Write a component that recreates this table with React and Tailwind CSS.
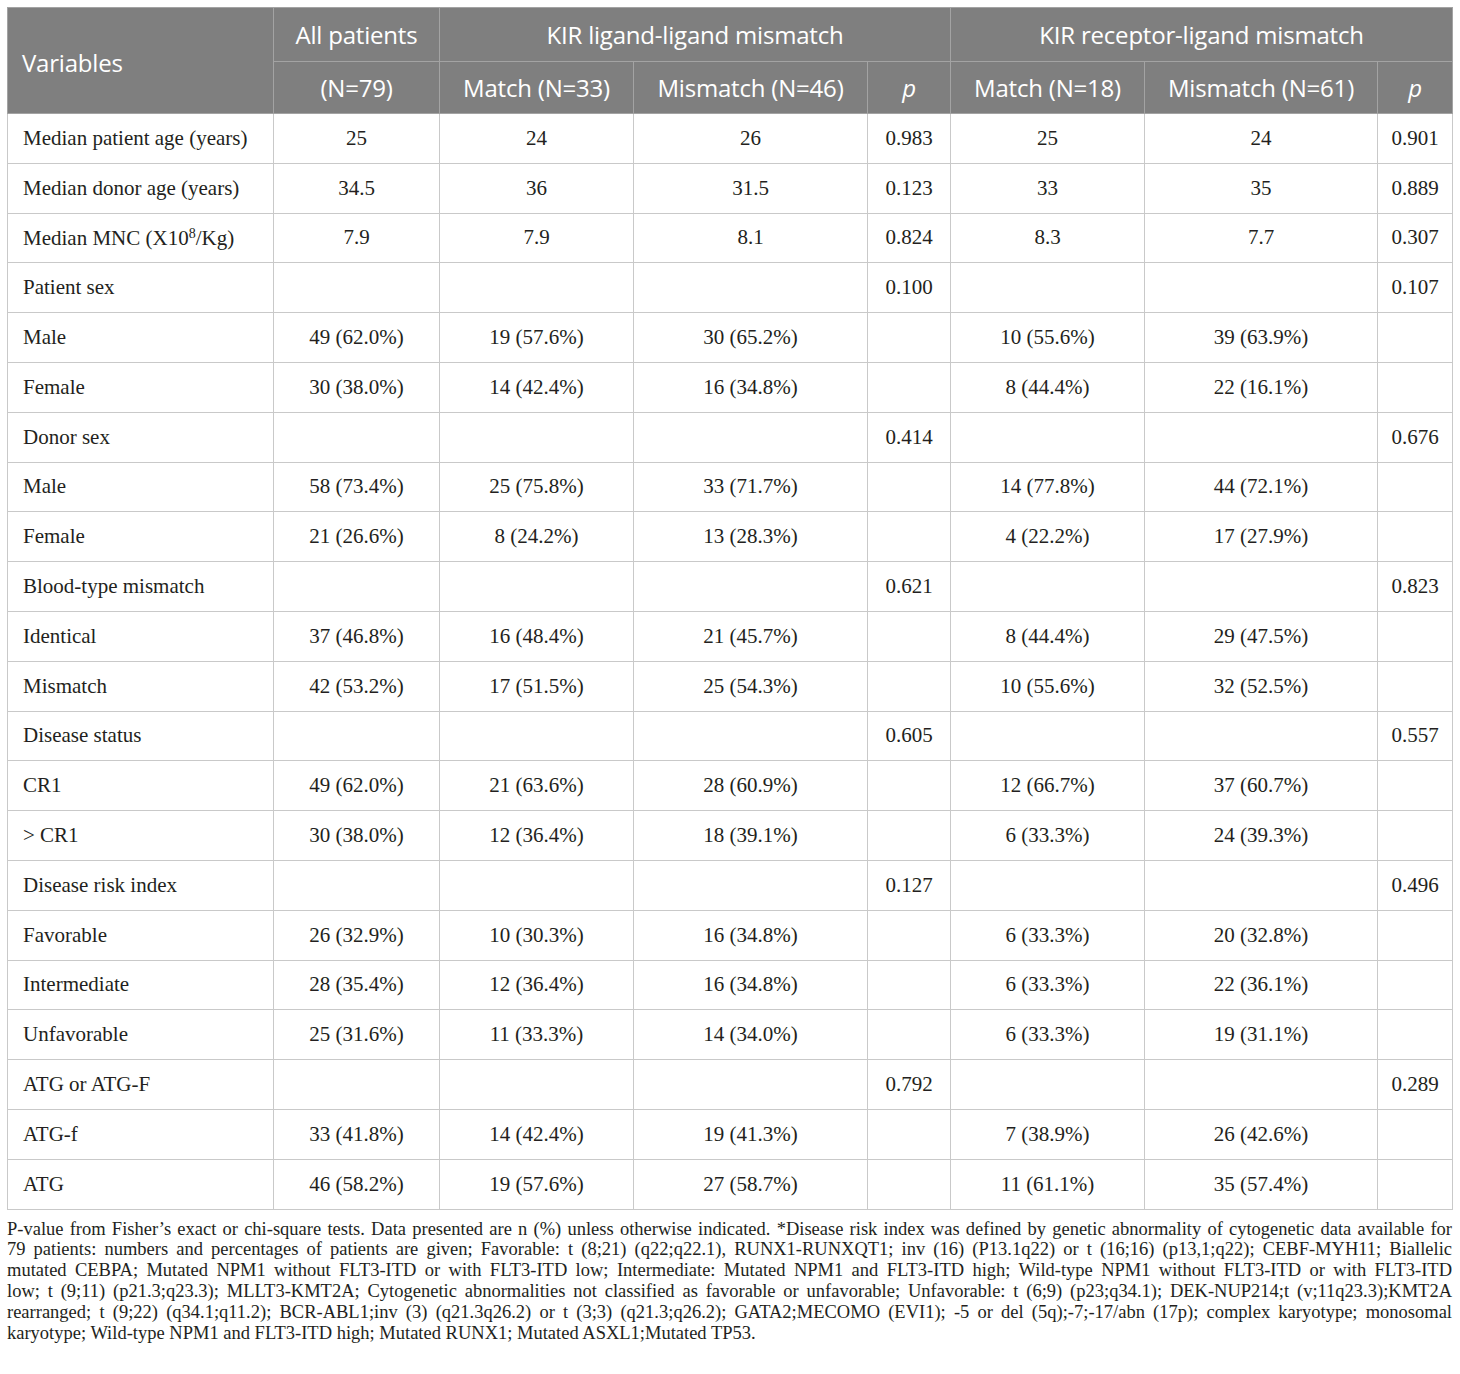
import React from "react";

const rows = [
  ["Median patient age (years)", "25", "24", "26", "0.983", "25", "24", "0.901"],
  ["Median donor age (years)", "34.5", "36", "31.5", "0.123", "33", "35", "0.889"],
  ["MNC", "7.9", "7.9", "8.1", "0.824", "8.3", "7.7", "0.307"],
  ["Patient sex", "", "", "", "0.100", "", "", "0.107"],
  ["Male", "49 (62.0%)", "19 (57.6%)", "30 (65.2%)", "", "10 (55.6%)", "39 (63.9%)", ""],
  ["Female", "30 (38.0%)", "14 (42.4%)", "16 (34.8%)", "", "8 (44.4%)", "22 (16.1%)", ""],
  ["Donor sex", "", "", "", "0.414", "", "", "0.676"],
  ["Male", "58 (73.4%)", "25 (75.8%)", "33 (71.7%)", "", "14 (77.8%)", "44 (72.1%)", ""],
  ["Female", "21 (26.6%)", "8 (24.2%)", "13 (28.3%)", "", "4 (22.2%)", "17 (27.9%)", ""],
  ["Blood-type mismatch", "", "", "", "0.621", "", "", "0.823"],
  ["Identical", "37 (46.8%)", "16 (48.4%)", "21 (45.7%)", "", "8 (44.4%)", "29 (47.5%)", ""],
  ["Mismatch", "42 (53.2%)", "17 (51.5%)", "25 (54.3%)", "", "10 (55.6%)", "32 (52.5%)", ""],
  ["Disease status", "", "", "", "0.605", "", "", "0.557"],
  ["CR1", "49 (62.0%)", "21 (63.6%)", "28 (60.9%)", "", "12 (66.7%)", "37 (60.7%)", ""],
  ["> CR1", "30 (38.0%)", "12 (36.4%)", "18 (39.1%)", "", "6 (33.3%)", "24 (39.3%)", ""],
  ["Disease risk index", "", "", "", "0.127", "", "", "0.496"],
  ["Favorable", "26 (32.9%)", "10 (30.3%)", "16 (34.8%)", "", "6 (33.3%)", "20 (32.8%)", ""],
  ["Intermediate", "28 (35.4%)", "12 (36.4%)", "16 (34.8%)", "", "6 (33.3%)", "22 (36.1%)", ""],
  ["Unfavorable", "25 (31.6%)", "11 (33.3%)", "14 (34.0%)", "", "6 (33.3%)", "19 (31.1%)", ""],
  ["ATG or ATG-F", "", "", "", "0.792", "", "", "0.289"],
  ["ATG-f", "33 (41.8%)", "14 (42.4%)", "19 (41.3%)", "", "7 (38.9%)", "26 (42.6%)", ""],
  ["ATG", "46 (58.2%)", "19 (57.6%)", "27 (58.7%)", "", "11 (61.1%)", "35 (57.4%)", ""],
];

const widths = [266, 166, 194, 234, 83, 194, 233, 75];

const footLines = [
  "P-value from Fisher’s exact or chi-square tests. Data presented are n (%) unless otherwise indicated. *Disease risk index was defined by genetic abnormality of cytogenetic data available for",
  "79 patients: numbers and percentages of patients are given; Favorable: t (8;21) (q22;q22.1), RUNX1-RUNXQT1; inv (16) (P13.1q22) or t (16;16) (p13,1;q22); CEBF-MYH11; Biallelic",
  "mutated CEBPA; Mutated NPM1 without FLT3-ITD or with FLT3-ITD low; Intermediate: Mutated NPM1 and FLT3-ITD high; Wild-type NPM1 without FLT3-ITD or with FLT3-ITD",
  "low; t (9;11) (p21.3;q23.3); MLLT3-KMT2A; Cytogenetic abnormalities not classified as favorable or unfavorable; Unfavorable: t (6;9) (p23;q34.1); DEK-NUP214;t (v;11q23.3);KMT2A",
  "rearranged; t (9;22) (q34.1;q11.2); BCR-ABL1;inv (3) (q21.3q26.2) or t (3;3) (q21.3;q26.2); GATA2;MECOMO (EVI1); -5 or del (5q);-7;-17/abn (17p); complex karyotype; monosomal",
  "karyotype; Wild-type NPM1 and FLT3-ITD high; Mutated RUNX1; Mutated ASXL1;Mutated TP53.",
];

const headFont = { fontFamily: '"Liberation Sans Narrow", "Open Sans", "Liberation Sans", sans-serif' };
const serif = { fontFamily: '"Liberation Serif", "DejaVu Serif", serif' };

export default function App() {
  const hcell = "border border-[#a3a3a3] text-white font-normal text-[24px] leading-none text-center px-1 tracking-[-0.2px]";
  return (
    <div className="bg-white w-[1460px] h-[1374px] pt-[7px] pl-[7px]">
      <table className="border-collapse table-fixed w-[1445px]" style={serif}>
        <colgroup>
          {widths.map((w, i) => (
            <col key={i} style={{ width: w }} />
          ))}
        </colgroup>
        <thead className="bg-[#7f7f7f]" style={headFont}>
          <tr className="h-[54px]">
            <th rowSpan={2} className={hcell + " text-left pl-[14px] border-[#7f7f7f] border-r-[#a3a3a3] border-b-[#a3a3a3] pt-[4px]"}>Variables</th>
            <th className={hcell + " border-b-[#a3a3a3]"}>All patients</th>
            <th colSpan={3} className={hcell}>KIR ligand-ligand mismatch</th>
            <th colSpan={3} className={hcell}>KIR receptor-ligand mismatch</th>
          </tr>
          <tr className="h-[52px]">
            <th className={hcell}>(N=79)</th>
            <th className={hcell}>Match (N=33)</th>
            <th className={hcell}>Mismatch (N=46)</th>
            <th className={hcell + " italic"}>p</th>
            <th className={hcell}>Match (N=18)</th>
            <th className={hcell}>Mismatch (N=61)</th>
            <th className={hcell + " italic"}>p</th>
          </tr>
        </thead>
        <tbody className="text-[21px] text-[#231f20]">
          {rows.map((r, i) => (
            <tr key={i} className="h-[49.8px]">
              {r.map((c, j) => (
                <td
                  key={j}
                  className={
                    "border border-[#c9c9c9] leading-none " +
                    (j === 0 ? "text-left pl-[15px]" : "text-center")
                  }
                >
                  {i === 2 && j === 0 ? (
                    <span>
                      Median MNC (X10<span className="text-[14px] align-[7px]">8</span>/Kg)
                    </span>
                  ) : (
                    c
                  )}
                </td>
              ))}
            </tr>
          ))}
        </tbody>
      </table>
      <div className="w-[1445px] text-[18.5px] leading-[20.8px] text-[#231f20] mt-[9px]" style={serif}>
        {footLines.map((l, i) => (
          <div
            key={i}
            className={
              "whitespace-nowrap " +
              (i < footLines.length - 1 ? "text-justify [text-align-last:justify]" : "text-left")
            }
          >
            {l}
          </div>
        ))}
      </div>
    </div>
  );
}
